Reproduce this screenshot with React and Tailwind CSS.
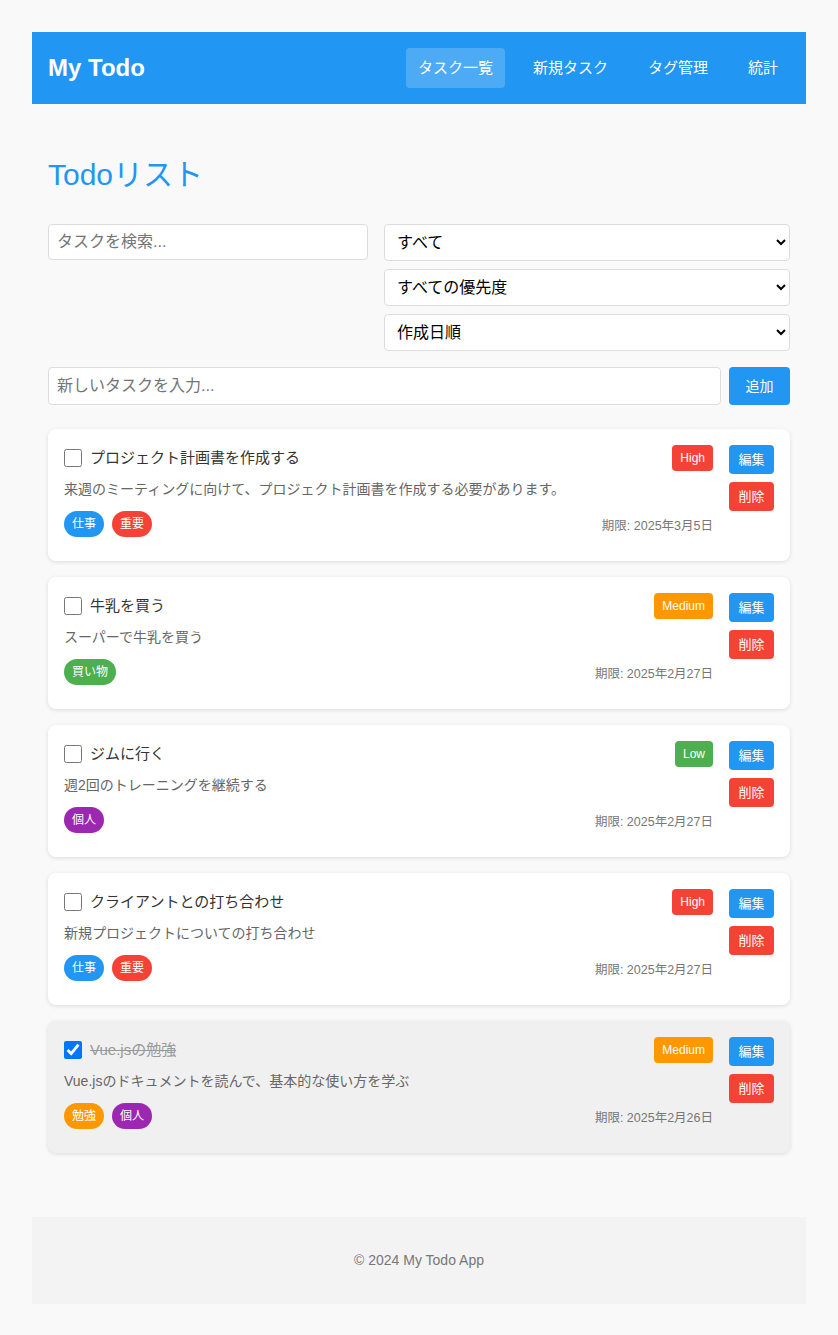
import React from "react";

const font = { fontFamily: '"Liberation Sans", "Noto Sans CJK JP", sans-serif' };

const tagColors = {
  仕事: "bg-[#2196f3]",
  重要: "bg-[#f44336]",
  買い物: "bg-[#4caf50]",
  個人: "bg-[#9c27b0]",
  勉強: "bg-[#ff9800]",
};

const prioColors = {
  High: "bg-[#f44336]",
  Medium: "bg-[#ff9800]",
  Low: "bg-[#4caf50]",
};

const todos = [
  {
    title: "プロジェクト計画書を作成する",
    desc: "来週のミーティングに向けて、プロジェクト計画書を作成する必要があります。",
    tags: ["仕事", "重要"],
    prio: "High",
    due: "期限: 2025年3月5日",
    done: false,
  },
  {
    title: "牛乳を買う",
    desc: "スーパーで牛乳を買う",
    tags: ["買い物"],
    prio: "Medium",
    due: "期限: 2025年2月27日",
    done: false,
  },
  {
    title: "ジムに行く",
    desc: "週2回のトレーニングを継続する",
    tags: ["個人"],
    prio: "Low",
    due: "期限: 2025年2月27日",
    done: false,
  },
  {
    title: "クライアントとの打ち合わせ",
    desc: "新規プロジェクトについての打ち合わせ",
    tags: ["仕事", "重要"],
    prio: "High",
    due: "期限: 2025年2月27日",
    done: false,
  },
  {
    title: "Vue.jsの勉強",
    desc: "Vue.jsのドキュメントを読んで、基本的な使い方を学ぶ",
    tags: ["勉強", "個人"],
    prio: "Medium",
    due: "期限: 2025年2月26日",
    done: true,
  },
];

function TodoCard({ t }) {
  return (
    <div
      className={`flex rounded-lg px-4 pt-4 pb-6 shadow-[0_1px_4px_rgba(0,0,0,0.12)] ${
        t.done ? "bg-[#f0f0f0]" : "bg-white"
      }`}
    >
      <div className="flex-1 min-w-0">
        <div className="flex items-center h-[26px]">
          <input
            type="checkbox"
            defaultChecked={t.done}
            className="m-0 w-[18px] h-[18px] shrink-0"
          />
          <span
            className={`ml-2 text-[15px] leading-[20px] ${
              t.done ? "line-through text-[#999]" : "text-[#333]"
            }`}
          >
            {t.title}
          </span>
          <div className="flex-1" />
          <span
            className={`${prioColors[t.prio]} text-white text-[12px] leading-[18px] px-2 py-1 rounded`}
          >
            {t.prio}
          </span>
        </div>
        <p className="mt-2 text-[14px] leading-[21px] text-[#666]">{t.desc}</p>
        <div className="mt-[11px] flex items-end justify-between">
          <div className="flex gap-2">
            {t.tags.map((tag) => (
              <span
                key={tag}
                className={`${tagColors[tag]} text-white text-[12px] leading-[18px] px-2 py-1 rounded-full`}
              >
                {tag}
              </span>
            ))}
          </div>
          <span className="text-[12.5px] leading-[18px] text-[#777] mb-[2px]">{t.due}</span>
        </div>
      </div>
      <div className="ml-4 flex flex-col gap-2">
        <button className="w-[45px] h-[29px] rounded bg-[#2196f3] text-white text-[13px]">
          編集
        </button>
        <button className="w-[45px] h-[29px] rounded bg-[#f44336] text-white text-[13px]">
          削除
        </button>
      </div>
    </div>
  );
}

export default function App() {
  return (
    <div className="min-h-[1335px] bg-[#f9f9f9] p-8" style={font}>
      <header className="h-[72px] bg-[#2196f3] px-4 flex items-center justify-between">
        <h1 className="text-white text-[24px] font-bold">My Todo</h1>
        <nav className="flex items-center gap-4">
          {["タスク一覧", "新規タスク", "タグ管理", "統計"].map((n, i) => (
            <a
              key={n}
              className={`h-10 px-3 flex items-center rounded text-white text-[15px] ${
                i === 0 ? "bg-white/20" : ""
              }`}
            >
              {n}
            </a>
          ))}
        </nav>
      </header>

      <main className="px-4 pt-8 pb-16">
        <h2 className="mt-5 mb-[30px] text-[30px] leading-[38px] text-[#2196f3]">Todoリスト</h2>

        <div className="flex gap-4 items-start">
          <input
            type="text"
            placeholder="タスクを検索..."
            className="w-[320px] h-9 px-2 text-[16px] bg-white border border-[#ddd] rounded outline-none placeholder:text-[#757575]"
          />
          <div className="flex-1 flex flex-col gap-2">
            {["すべて", "すべての優先度", "作成日順"].map((s) => (
              <select
                key={s}
                className="h-[37px] px-2 text-[16px] text-black bg-white border border-[#ddd] rounded outline-none"
              >
                <option>{s}</option>
              </select>
            ))}
          </div>
        </div>

        <div className="mt-4 flex gap-2">
          <input
            type="text"
            placeholder="新しいタスクを入力..."
            className="flex-1 h-[38px] px-2 text-[16px] bg-white border border-[#ddd] rounded outline-none placeholder:text-[#757575]"
          />
          <button className="w-[61px] h-[38px] rounded bg-[#2196f3] text-white text-[14px]">
            追加
          </button>
        </div>

        <div className="mt-6 flex flex-col gap-4">
          {todos.map((t) => (
            <TodoCard key={t.title} t={t} />
          ))}
        </div>
      </main>

      <footer className="h-[87px] bg-[#f3f3f3] flex items-center justify-center text-[14px] text-[#777]">
        © 2024 My Todo App
      </footer>
    </div>
  );
}
